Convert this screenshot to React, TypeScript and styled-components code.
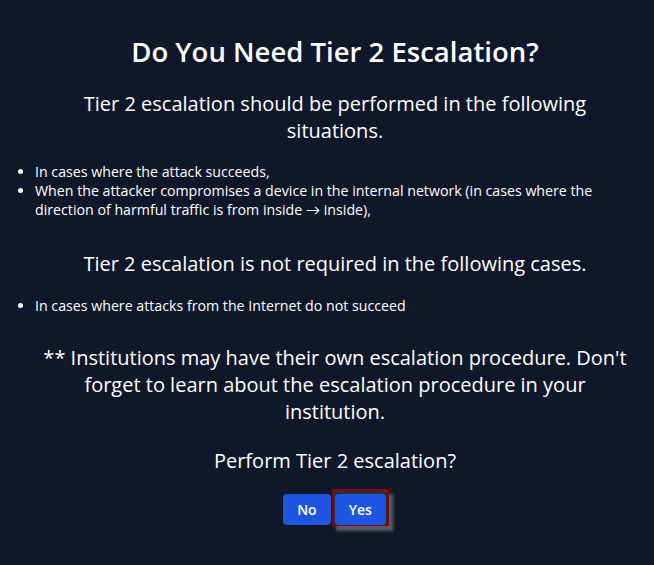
import React from "react";
import styled, { createGlobalStyle } from "styled-components";

const GlobalStyle = createGlobalStyle`
  html, body {
    margin: 0;
    padding: 0;
    background: #0f172a;
  }
  body {
    font-family: "Open Sans", Lato, sans-serif;
    color: #ffffff;
  }
`;

const Page = styled.div`
  min-height: 565px;
  box-sizing: border-box;
  padding: 33px 0 0 16px;
  background: #0f172a;
  color: #fff;
`;

const Title = styled.h1`
  margin: 0;
  font-size: 27.5px;
  line-height: 37px;
  font-weight: 600;
  text-align: center;
`;

const Lead = styled.p<{ $top: number }>`
  margin: ${(p) => p.$top}px 0 0;
  padding: 0 24px;
  font-size: 20px;
  line-height: 27px;
  text-align: center;
`;

const List = styled.ul<{ $top: number }>`
  margin: ${(p) => p.$top}px 0 0;
  padding: 0 16px 0 19px;
  font-size: 14.2px;
  line-height: 19px;
  li {
    margin: 0;
  }
`;

const Question = styled.p`
  margin: 24px 0 0;
  font-size: 20px;
  line-height: 24px;
  text-align: center;
`;

const Actions = styled.div`
  display: flex;
  justify-content: center;
  align-items: flex-start;
  gap: 1px;
  margin-top: 16px;
  padding-left: 2px;
`;

const Button = styled.button<{ $offset?: number }>`
  font-family: "Open Sans", Lato, sans-serif;
  font-size: 14px;
  font-weight: 600;
  color: #fff;
  background: #1d55e0;
  border: none;
  border-radius: 4px;
  height: 31px;
  padding: 0 14px;
  margin-top: ${(p) => p.$offset ?? 0}px;
  cursor: pointer;
`;

const FocusFrame = styled.span`
  display: inline-flex;
  border: 2px solid #8b0000;
  padding: 3px 1px 0;
  background: #2a2e36;
  box-shadow: 4px 5px 3px rgba(110, 110, 110, 0.8);
  ${Button} {
    margin-bottom: -1px;
  }
`;

const App = () => {
  return (
    <Page>
      <GlobalStyle />
      <Title>Do You Need Tier 2 Escalation?</Title>
      <Lead $top={20}>
        Tier 2 escalation should be performed in the following situations.
      </Lead>
      <List $top={18}>
        <li>In cases where the attack succeeds,</li>
        <li>
          When the attacker compromises a device in the internal network (in
          cases where the direction of harmful traffic is from inside → inside),
        </li>
      </List>
      <Lead $top={31}>
        Tier 2 escalation is not required in the following cases.
      </Lead>
      <List $top={19}>
        <li>In cases where attacks from the Internet do not succeed</li>
      </List>
      <Lead $top={29}>
        ** Institutions may have their own escalation procedure. Don't forget to
        learn about the escalation procedure in your institution.
      </Lead>
      <Question>Perform Tier 2 escalation?</Question>
      <Actions>
        <Button $offset={5}>No</Button>
        <FocusFrame>
          <Button>Yes</Button>
        </FocusFrame>
      </Actions>
    </Page>
  );
};

export default App;
